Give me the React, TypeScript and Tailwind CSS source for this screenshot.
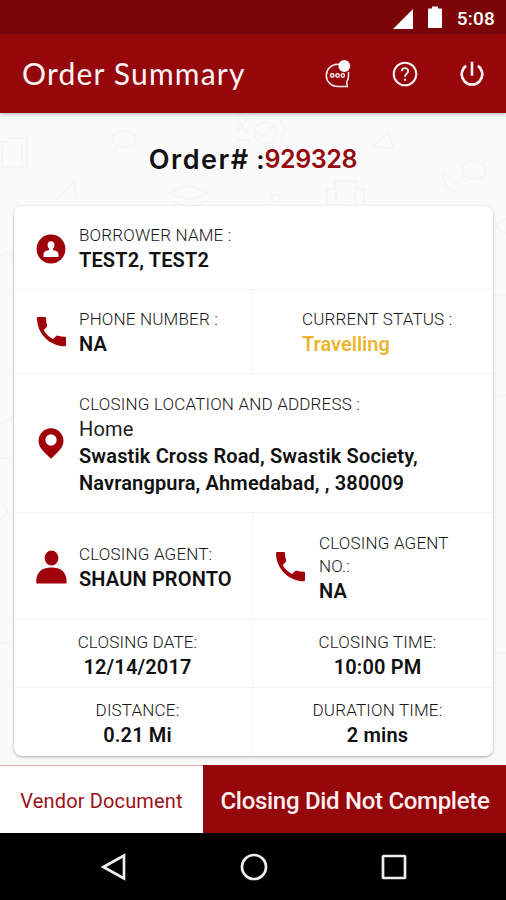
import type { ReactNode } from "react";

const PhoneIcon = () => (
  <svg viewBox="0 0 30 30" className="h-[30px] w-[30px] shrink-0 fill-[#9f0109]">
    <path d="M0.8 0H8q1 0 1 1 0 3.700 1.100 7.200 .3 1-.5 1.800L6.700 13.200Q10.200 19 15.900 22L19 19.200q.8-.8 1.900-.5 3.400 1 7.100 1.100 1 0 1 1v7.400q0 1.100-1 1.100C12.500 29.200 0 16.600 0 1Q0 0 .8 0Z" />
  </svg>
);

const BorrowerIcon = () => (
  <svg viewBox="0 0 30 30" className="h-[30px] w-[30px] shrink-0">
    <circle cx="15" cy="15" r="14.400" fill="#9f0109" />
    <path
      fill="white"
      d="M15 7.200c2.300 0 3.600 1.700 3.400 4-.1 1.700-.8 2.800-1.400 3.400v1.400l3.800 1.300c1.200.5 1.800 1.700 1.800 5v.6H7.400v-.6c0-3.300.6-4.500 1.800-5L13 16v-1.400c-.6-.6-1.300-1.700-1.400-3.400-.2-2.300 1.100-4 3.400-4Z"
    />
  </svg>
);

const PinIcon = () => (
  <svg viewBox="0 0 26 31" className="h-[31px] w-[26px] shrink-0 fill-[#9f0109]">
    <path
      fillRule="evenodd"
      d="M13 .3A12.500 12.500 0 0 0 .5 12.800C.5 20 6.600 24.500 13 30.700 19.400 24.500 25.500 20 25.500 12.800A12.500 12.500 0 0 0 13 .3Zm0 6a5.700 5.700 0 1 1 0 11.400 5.700 5.700 0 0 1 0-11.400Z"
    />
  </svg>
);

const AgentIcon = () => (
  <svg viewBox="0 0 32 34" className="h-[34px] w-8 shrink-0 fill-[#9f0109]">
    <ellipse cx="16.500" cy="8" rx="6.900" ry="7.500" />
    <path d="M1.300 33V30.500C1.300 22 7.500 17.500 16.500 17.500S31.500 22 31.500 30.500V33q0 .5-.6.5H1.900Q1.300 33.500 1.300 33Z" />
  </svg>
);

const ChatIcon = () => (
  <svg viewBox="0 0 26 28" className="h-7 w-[26px]" fill="none" stroke="#fdeeee">
    <path strokeWidth="1.500" d="M14 4.200h-1.500a11.200 11.200 0 0 0 0 22.400H22.300l-.6-4.500A11 11 0 0 0 23.500 15v-3" />
    <g strokeWidth="1.400">
      <circle cx="7.200" cy="15.500" r="1.700" />
      <circle cx="12.500" cy="15.500" r="1.700" />
      <circle cx="17.800" cy="15.500" r="1.700" />
    </g>
    <circle cx="19.300" cy="6" r="5.900" fill="white" stroke="none" />
  </svg>
);

const HelpIcon = () => (
  <svg viewBox="0 0 26 26" className="h-[26px] w-[26px]" fill="none" stroke="#fff3f3" strokeWidth="2">
    <circle cx="13" cy="13" r="11.300" />
    <path strokeWidth="1.800" d="M9.800 10.300C9.800 6 16.200 6.200 16.200 10c0 2.600-3.200 2.700-3.200 5.700" />
    <path strokeWidth="2" d="M13 17.700v2" />
  </svg>
);

const PowerIcon = () => (
  <svg viewBox="0 0 24 26" className="h-[26px] w-6" fill="none" stroke="#fff3f3" strokeWidth="2.600">
    <path d="M12 .7v14" />
    <path d="M6.200 4.700a10.300 10.300 0 1 0 11.600 0" />
  </svg>
);

// Faint doodles behind the order heading and the card
const Doodles = () => (
  <svg
    viewBox="0 0 506 652"
    className="absolute inset-0 h-full w-full"
    fill="none"
    stroke="#f4f4f4"
    strokeWidth="1.500"
  >
    <path d="M0 29h8v-4h19v29H2V32M22 28v24" />
    <ellipse cx="124" cy="26" rx="12" ry="8" />
    <path d="M118 33l-5 6M236 3l12 18M249 4l-13 16M237 27h14" />
    <circle cx="265" cy="20" r="11" />
    <path d="M256 18l6 6 12-12M280 7l6 9-5 12" />
    <path d="M373 34l15-14 6 15ZM58 86l16-19 2 18" />
    <path d="M169 80l20-8 20 8-20 7ZM171 88l18 7 19-7" />
    <path d="M327 91V76h8v-8h21v8h8v16M336 79v12M355 79v12" />
    <ellipse cx="474" cy="57" rx="12" ry="9" />
    <path d="M462 61c1 7-2 10-9 8-5-2-7-12-10-9-1 9 5 19 12 18M272 82v6h7v-6Z" />
    <path d="M0 143c8-6 13-2 14 5M0 312l13-8M0 345h9M493 182h13M493 285l13-3M0 390c8 4 10 12 0 17" />
    <path d="M506 106c-12 2-12 12 0 14M493 540h13M0 530h10" />
  </svg>
);

const Label = ({ children }: { children: ReactNode }) => (
  <p className="text-[17px] font-light leading-[23px] tracking-[0.18px] text-[#161616]">{children}</p>
);

const Value = ({ children }: { children: ReactNode }) => (
  <p className="text-xl font-semibold leading-[27px] tracking-[0.15px] text-[#101010]">{children}</p>
);

const App = () => {
  return (
    <div className="flex h-[900px] w-[506px] flex-col overflow-hidden bg-[#fafafa] font-['Roboto',sans-serif]">
      <div className="flex h-[34px] shrink-0 items-center justify-end bg-[#7c050a] pr-[11px] text-white">
        <svg viewBox="0 0 20 20" className="mr-[15px] mt-[3px] h-5 w-5 fill-white">
          <path d="M20 0v20H0Z" />
        </svg>
        <svg viewBox="0 0 14 22" className="mr-[15px] h-[22px] w-[14px] fill-white">
          <path d="M4 .5h6v2h3q1 0 1 1V21q0 1-1 1H1q-1 0-1-1V3.500q0-1 1-1h3Z" />
        </svg>
        <span className="pt-[2px] text-[19px] font-medium leading-none tracking-[0.2px]">5:08</span>
      </div>

      <header className="z-10 flex h-[79px] shrink-0 items-center bg-[#96070c] pl-[22px] pr-[22px] shadow-[0_1px_4px_rgba(0,0,0,0.3)]">
        <h1 className="mr-auto whitespace-nowrap pb-[2px] font-['Lato',sans-serif] text-[30px] leading-none tracking-[1.2px] text-[#fff5f5]">
          Order Summary
        </h1>
        <div className="flex items-center">
          <ChatIcon />
          <span className="ml-[41px] mr-[42px]">
            <HelpIcon />
          </span>
          <PowerIcon />
        </div>
      </header>

      <main className="relative h-[652px] shrink-0">
        <Doodles />
        <div className="relative flex h-[93px] items-center justify-center whitespace-pre font-['Inter',sans-serif] text-[26px] font-semibold leading-none text-[#111]">
          <span className="text-[27px] tracking-[1.5px]">Order#</span>
          <span> :</span>
          <span className="text-[25px] tracking-[-0.4px] text-[#920b10]">929328</span>
        </div>

        <section className="relative ml-[14px] h-[550px] w-[479px] divide-y divide-[#f5f5f5] rounded-lg bg-white shadow-[0_1px_3px_rgba(0,0,0,0.32)]">
          <div className="flex h-[84px] items-center pl-[22px] pt-[2px]">
            <BorrowerIcon />
            <div className="ml-[13px]">
              <Label>BORROWER NAME :</Label>
              <Value>TEST2, TEST2</Value>
            </div>
          </div>

          <div className="flex h-[84px] divide-x divide-[#f5f5f5]">
            <div className="flex w-[239px] items-center pl-[23px] pt-px">
              <PhoneIcon />
              <div className="ml-3 pt-[2px]">
                <Label>PHONE NUMBER :</Label>
                <Value>NA</Value>
              </div>
            </div>
            <div className="flex flex-1 flex-col justify-center pl-[49px] pt-[3px]">
              <Label>CURRENT STATUS :</Label>
              <p className="text-xl font-semibold leading-[27px] text-[#edb52e]">Travelling</p>
            </div>
          </div>

          <div className="flex h-[139px] items-center pl-6">
            <PinIcon />
            <div className="ml-[15px] pt-1">
              <Label>CLOSING LOCATION AND ADDRESS :</Label>
              <p className="text-xl leading-[27px] tracking-[0.2px] text-[#1c1c1c]">Home</p>
              <Value>
                Swastik Cross Road, Swastik Society,
                <br />
                Navrangpura, Ahmedabad, , 380009
              </Value>
            </div>
          </div>

          <div className="flex h-[107px] divide-x divide-[#f5f5f5]">
            <div className="flex w-[239px] items-center pl-[21px] pt-px">
              <AgentIcon />
              <div className="ml-3 whitespace-nowrap pt-[2px]">
                <Label>CLOSING AGENT:</Label>
                <Value>SHAUN PRONTO</Value>
              </div>
            </div>
            <div className="flex flex-1 items-center pl-[23px] pt-[2px]">
              <PhoneIcon />
              <div className="ml-[13px] pt-[2px]">
                <Label>
                  CLOSING AGENT
                  <br />
                  NO.:
                </Label>
                <Value>NA</Value>
              </div>
            </div>
          </div>

          <div className="flex h-[68px] divide-x divide-[#f5f5f5] text-center">
            <div className="flex w-[239px] flex-col justify-center pl-[9px] pt-1">
              <Label>CLOSING DATE:</Label>
              <Value>12/14/2017</Value>
            </div>
            <div className="flex flex-1 flex-col justify-center pl-[9px] pt-1">
              <Label>CLOSING TIME:</Label>
              <Value>10:00 PM</Value>
            </div>
          </div>

          <div className="flex h-[68px] divide-x divide-[#f5f5f5] text-center">
            <div className="flex w-[239px] flex-col justify-center pl-[9px] pt-[3px]">
              <Label>DISTANCE:</Label>
              <Value>0.21 Mi</Value>
            </div>
            <div className="flex flex-1 flex-col justify-center pl-[9px] pt-[3px]">
              <Label>DURATION TIME:</Label>
              <Value>2 mins</Value>
            </div>
          </div>
        </section>
      </main>

      <div className="flex h-[68px] shrink-0">
        <button className="w-[203px] border-t border-[#d9a9ab] bg-white pt-[2px] text-xl tracking-[0.15px] text-[#9c1016]">
          Vendor Document
        </button>
        <button className="flex-1 whitespace-nowrap bg-[#96070c] pl-px pt-[3px] text-2xl font-medium tracking-[-0.3px] text-[#fff0f0]">
          Closing Did Not Complete
        </button>
      </div>

      <nav className="flex flex-1 items-center bg-black pl-[101px]">
        <svg viewBox="0 0 25 28" className="h-7 w-[25px]" fill="none" stroke="#eee" strokeWidth="2.700">
          <path d="M23 2.500v23L2.500 14Z" />
        </svg>
        <svg viewBox="0 0 28 28" className="ml-[114px] h-7 w-7" fill="none" stroke="#eee" strokeWidth="2.700">
          <circle cx="14" cy="14" r="12" />
        </svg>
        <svg viewBox="0 0 26 26" className="ml-[113px] h-[26px] w-[26px]" fill="none" stroke="#eee" strokeWidth="2.700">
          <rect x="2" y="2" width="22" height="22" rx=".5" />
        </svg>
      </nav>
    </div>
  );
};

export default App;
